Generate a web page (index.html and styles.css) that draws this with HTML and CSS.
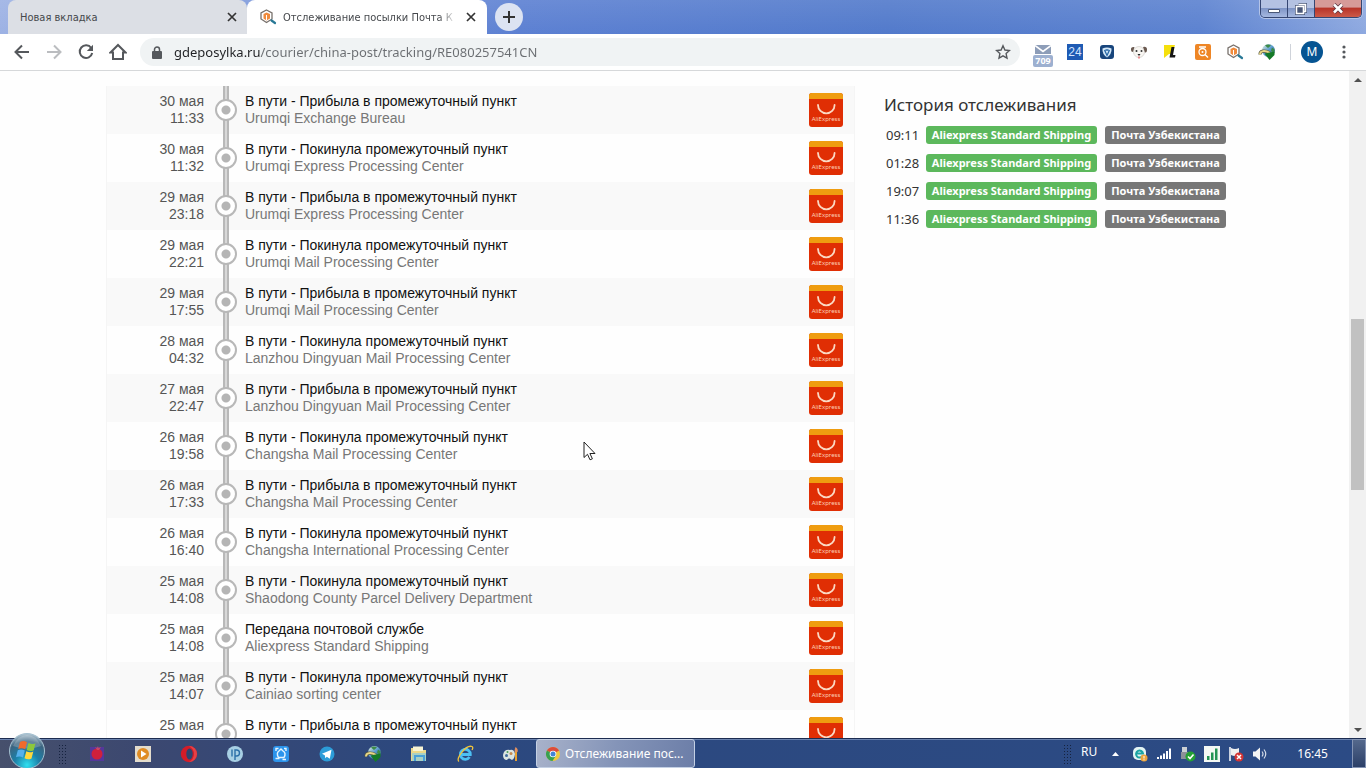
FILE: index.html
```html
<!DOCTYPE html>
<html lang="ru">
<head>
<meta charset="utf-8">
<title>Отслеживание посылки</title>
<link rel="stylesheet" href="styles.css">
</head>
<body>
<svg class="defs" aria-hidden="true">
  <linearGradient id="globe" x1="0" y1="0" x2="1" y2="1"><stop offset="0" stop-color="#e8f4d8"/><stop offset=".5" stop-color="#5a9ad0"/><stop offset="1" stop-color="#1c5a3a"/></linearGradient>
  <radialGradient id="orb" cx=".5" cy=".9" r=".9"><stop offset="0" stop-color="#2fe0f0"/><stop offset=".4" stop-color="#1c80a8"/><stop offset=".75" stop-color="#3c6480"/><stop offset="1" stop-color="#b8ccd8"/></radialGradient>
  <symbol id="ali" viewBox="0 0 34 34"><rect width="34" height="34" rx="3" fill="#e02e04"/><path d="M0 6V3Q0 0 3 0H31Q34 0 34 3V6Z" fill="#ef9d10"/><path d="M9 12a8.3 8.3 0 0 0 16.600 0" fill="none" stroke="#fbd9c4" stroke-width="1.800" stroke-linecap="round"/></symbol>
  <symbol id="parcel" viewBox="0 0 18 18"><path d="M7.500 2 13 5V11L7.500 14.500 2 11V5Z" fill="#fff" stroke="#78716c" stroke-width="1.300"/><path d="M4.500 6 7.500 4.500 11 6V10.500L7.500 12.500 4.500 10.500Z" fill="#f08a3c"/><path d="M7.500 7v5" stroke="#fff"/><path d="m12.500 12.500 3.500 2.500" stroke="#287896" stroke-width="2.200" stroke-linecap="round"/></symbol>
  <symbol id="idm" viewBox="0 0 18 18"><circle cx="10.500" cy="7.500" r="6.500" fill="url(#globe)"/><path d="M7 2.500q3-2 6 0l-3 2.500ZM14 4.500l2.500 2-1 4-2.500-3Z" fill="#3c8a48"/><path d="M2 11.500C2 7.500 7 7 12 10" fill="none" stroke="#5a5a40" stroke-width="3.200"/><path d="M2 11.500C2 7.500 7 7 12 10" fill="none" stroke="#e8d888" stroke-width="2"/><path d="M6.500 10.500 16.500 8.500V12L11.500 17Z" fill="#157a28"/></symbol>
  <symbol id="x" viewBox="0 0 10 10"><path d="m1 1 8 8M9 1 1 9" stroke="currentColor" stroke-width="1.700"/></symbol>
</svg>

<header class="tabs">
  <div class="tab"><span class="tab-title">Новая вкладка</span><button class="tab-close" aria-label="Закрыть"><svg width="10" height="10"><use href="#x"/></svg></button></div>
  <div class="tab tab-active"><svg width="18" height="18"><use href="#parcel"/></svg><span class="tab-title fade">Отслеживание посылки Почта К</span><button class="tab-close" aria-label="Закрыть"><svg width="10" height="10"><use href="#x"/></svg></button></div>
  <button class="new-tab" aria-label="Новая вкладка"><svg width="14" height="14" viewBox="0 0 14 14"><path d="M7 1v12M1 7h12" stroke="#333" stroke-width="2"/></svg></button>
  <div class="window-controls">
    <button aria-label="Свернуть"><svg width="14" height="10" viewBox="0 0 14 10"><path d="M1.500 5.500h11v3h-11z" fill="#fff" stroke="#4a5878"/></svg></button>
    <button aria-label="Развернуть"><svg width="14" height="12" viewBox="0 0 14 12"><path d="M4.500 1.500h7v7h-2M2.500 3.500h7v7h-7zM5.500 6.500h1v1h-1z" fill="none" stroke="#4a5878" stroke-width="3"/><path d="M4.500 1.500h7v7h-2M2.500 3.500h7v7h-7z" fill="none" stroke="#fff" stroke-width="1.600"/></svg></button>
    <button class="close" aria-label="Закрыть"><svg width="12" height="11" viewBox="0 0 12 11"><path d="m2 1.500 8 8M10 1.500l-8 8" stroke="#5a3440" stroke-width="4"/><path d="m2 1.500 8 8M10 1.500l-8 8" stroke="#fff" stroke-width="2.500"/></svg></button>
  </div>
</header>

<nav class="toolbar">
  <button class="tool" aria-label="Назад"><svg width="16" height="16" viewBox="0 0 16 16"><path d="M15 8H2M8 1.500 1.500 8 8 14.500" fill="none" stroke="#55585c" stroke-width="2"/></svg></button>
  <button class="tool" aria-label="Вперёд"><svg width="16" height="16" viewBox="0 0 16 16"><path d="M1 8h13M8 1.500 14.500 8 8 14.500" fill="none" stroke="#bbbdc0" stroke-width="2"/></svg></button>
  <button class="tool" aria-label="Обновить"><svg width="16" height="16" viewBox="0 0 16 16"><path d="M13.200 4A6.300 6.300 0 1 0 14.200 9" fill="none" stroke="#55585c" stroke-width="2"/><path d="M15 .8V7H8.800Z" fill="#55585c"/></svg></button>
  <button class="tool" aria-label="Домой"><svg width="18" height="18" viewBox="0 0 18 18"><path d="M1.500 9.500 9 2l7.500 7.500H14V16H4V9.500Z" fill="none" stroke="#55585c" stroke-width="2"/></svg></button>
  <div class="omnibox">
    <svg width="10" height="13" viewBox="0 0 10 13"><path d="M1 5h8q1 0 1 1v6q0 1-1 1H1q-1 0-1-1V6q0-1 1-1Z" fill="#55585c"/><path d="M2.500 6V3.500a2.500 2.500 0 0 1 5 0V6" fill="none" stroke="#55585c" stroke-width="1.500"/></svg>
    <input class="url" type="text" aria-label="Адрес" value="gdeposylka.ru/courier/china-post/tracking/RE080257541CN">
    <button class="star" aria-label="В закладки"><svg width="16" height="16" viewBox="0 0 16 16"><path d="m8 1.800 1.900 4.200 4.600.5-3.400 3.100.9 4.500L8 11.800l-4 2.300.9-4.500L1.500 6.500 6.100 6Z" fill="none" stroke="#55585c" stroke-width="1.400"/></svg></button>
  </div>
  <div class="extensions">
    <button class="tool mail" aria-label="Почта"><svg width="16" height="9" viewBox="0 0 16 9"><path d="M0 0h16v9H0z" fill="#8d9db8"/><path d="m0 .5 8 6 8-6" fill="none" stroke="#fff" stroke-width="1.600"/></svg><span class="mail-count">709</span></button>
    <button class="tool"><span class="ext-24">24</span></button>
    <button class="tool" aria-label="Защита"><svg width="14" height="14" viewBox="0 0 14 14"><rect width="14" height="14" rx="3" fill="#18457c"/><path d="M2.500 3.500Q7 1.500 11.500 3.500Q12 9 7 12.500Q2 9 2.500 3.500Z" fill="#d4e8f8"/><path d="M4.500 5 7 10.500 9.500 5M5.500 5h3" fill="none" stroke="#2a6aa8" stroke-width="1.300"/></svg></button>
    <button class="tool" aria-label="Собака"><svg width="18" height="14" viewBox="0 0 18 14"><ellipse cx="9" cy="7" rx="5.500" ry="5.500" fill="#f8f6f2" stroke="#c8c4c0" stroke-width=".6"/><path d="M4.500 2Q.5 1.500 1 5q0 2 2 2ZM13 2q4-.8 4 2.500 0 3.500-2 3Z" fill="#6a5a50"/><circle cx="6.500" cy="6" r="1" fill="#333"/><circle cx="11.500" cy="6" r="1" fill="#333"/><path d="M7.500 9h3L9 11Z" fill="#222"/><path d="M8 11.500h2v2H8z" fill="#e88c90"/></svg></button>
    <button class="tool" aria-label="Letyshops"><svg width="14" height="14" viewBox="0 0 14 14"><path d="M0 0h11L8 9H5l-5 4Z" fill="#f5e00c"/><path d="M7.500 2h3L9 10h2.500l-.5 2.500H5.500Z" fill="#151515"/></svg></button>
    <button class="tool" aria-label="Поиск товаров"><svg width="16" height="16" viewBox="0 0 16 16"><rect width="16" height="16" rx="2" fill="#ee8626"/><circle cx="7.500" cy="8" r="3.500" fill="none" stroke="#fff" stroke-width="1.300"/><path d="m10 10.500 3 3M4 3h7" stroke="#fff" stroke-width="1.400"/><circle cx="7.500" cy="8" r="1" fill="#fff"/></svg></button>
    <button class="tool" aria-label="Где посылка"><svg width="18" height="18"><use href="#parcel"/></svg></button>
    <button class="tool" aria-label="Загрузчик"><svg width="18" height="18"><use href="#idm"/></svg></button>
  </div>
  <span class="divider"></span>
  <button class="tool"><span class="avatar">М</span></button>
  <button class="tool" aria-label="Меню"><svg width="4" height="14" viewBox="0 0 4 14"><g fill="#55585c"><circle cx="2" cy="2" r="1.600"/><circle cx="2" cy="7" r="1.600"/><circle cx="2" cy="12" r="1.600"/></g></svg></button>
</nav>

<div class="viewport">
  <main class="page">
    <ol class="events">
      <li><time>30 мая<br>11:33</time><i class="dot"></i><p>В пути - Прибыла в промежуточный пункт<br><small>Urumqi Exchange Bureau</small></p><span class="ali"><svg><use href="#ali"/></svg><b>AliExpress</b></span></li>
      <li><time>30 мая<br>11:32</time><i class="dot"></i><p>В пути - Покинула промежуточный пункт<br><small>Urumqi Express Processing Center</small></p><span class="ali"><svg><use href="#ali"/></svg><b>AliExpress</b></span></li>
      <li><time>29 мая<br>23:18</time><i class="dot"></i><p>В пути - Прибыла в промежуточный пункт<br><small>Urumqi Express Processing Center</small></p><span class="ali"><svg><use href="#ali"/></svg><b>AliExpress</b></span></li>
      <li><time>29 мая<br>22:21</time><i class="dot"></i><p>В пути - Покинула промежуточный пункт<br><small>Urumqi Mail Processing Center</small></p><span class="ali"><svg><use href="#ali"/></svg><b>AliExpress</b></span></li>
      <li><time>29 мая<br>17:55</time><i class="dot"></i><p>В пути - Прибыла в промежуточный пункт<br><small>Urumqi Mail Processing Center</small></p><span class="ali"><svg><use href="#ali"/></svg><b>AliExpress</b></span></li>
      <li><time>28 мая<br>04:32</time><i class="dot"></i><p>В пути - Покинула промежуточный пункт<br><small>Lanzhou Dingyuan Mail Processing Center</small></p><span class="ali"><svg><use href="#ali"/></svg><b>AliExpress</b></span></li>
      <li><time>27 мая<br>22:47</time><i class="dot"></i><p>В пути - Прибыла в промежуточный пункт<br><small>Lanzhou Dingyuan Mail Processing Center</small></p><span class="ali"><svg><use href="#ali"/></svg><b>AliExpress</b></span></li>
      <li><time>26 мая<br>19:58</time><i class="dot"></i><p>В пути - Покинула промежуточный пункт<br><small>Changsha Mail Processing Center</small></p><span class="ali"><svg><use href="#ali"/></svg><b>AliExpress</b></span></li>
      <li><time>26 мая<br>17:33</time><i class="dot"></i><p>В пути - Прибыла в промежуточный пункт<br><small>Changsha Mail Processing Center</small></p><span class="ali"><svg><use href="#ali"/></svg><b>AliExpress</b></span></li>
      <li><time>26 мая<br>16:40</time><i class="dot"></i><p>В пути - Покинула промежуточный пункт<br><small>Changsha International Processing Center</small></p><span class="ali"><svg><use href="#ali"/></svg><b>AliExpress</b></span></li>
      <li><time>25 мая<br>14:08</time><i class="dot"></i><p>В пути - Покинула промежуточный пункт<br><small>Shaodong County Parcel Delivery Department</small></p><span class="ali"><svg><use href="#ali"/></svg><b>AliExpress</b></span></li>
      <li><time>25 мая<br>14:08</time><i class="dot"></i><p>Передана почтовой службе<br><small>Aliexpress Standard Shipping</small></p><span class="ali"><svg><use href="#ali"/></svg><b>AliExpress</b></span></li>
      <li><time>25 мая<br>14:07</time><i class="dot"></i><p>В пути - Покинула промежуточный пункт<br><small>Cainiao sorting center</small></p><span class="ali"><svg><use href="#ali"/></svg><b>AliExpress</b></span></li>
      <li><time>25 мая</time><i class="dot"></i><p>В пути - Прибыла в промежуточный пункт</p><span class="ali"><svg><use href="#ali"/></svg></span></li>
    </ol>
    <aside class="history">
      <h2>История отслеживания</h2>
      <ul>
        <li><time>09:11</time><span class="label green">Aliexpress Standard Shipping</span><span class="label">Почта Узбекистана</span></li>
        <li><time>01:28</time><span class="label green">Aliexpress Standard Shipping</span><span class="label">Почта Узбекистана</span></li>
        <li><time>19:07</time><span class="label green">Aliexpress Standard Shipping</span><span class="label">Почта Узбекистана</span></li>
        <li><time>11:36</time><span class="label green">Aliexpress Standard Shipping</span><span class="label">Почта Узбекистана</span></li>
      </ul>
    </aside>
  </main>
  <div class="scrollbar"><i class="arrow up"></i><div class="track"><div class="thumb"></div></div><i class="arrow down"></i></div>
</div>

<footer class="taskbar">
  <button class="start" aria-label="Пуск"><svg width="38" height="38" viewBox="0 0 38 38"><circle cx="19" cy="19" r="17.500" fill="url(#orb)" stroke="#a4c0d0"/><path d="M5 14Q10 3 19 3T33 14Q19 19 5 14Z" fill="#fff" opacity=".22"/><path d="M12 10q3.500-2 7 .2l-1.800 7q-3.400-2-7-.2Z" fill="#f06a2c"/><path d="M20.500 11q3.500 2 7 .2l-1.800 7q-3.500 1.800-7-.2Z" fill="#8cc83c"/><path d="M9.800 18.300q3.400-1.800 7 .2l-1.800 7q-3.500-2-7-.2Z" fill="#54b0ec"/><path d="M18.300 19.300q3.500 2 7 .2l-1.800 7q-3.500 1.800-7-.2Z" fill="#ffd83c"/></svg></button>
  <i class="grip"></i>
  <div class="launch">
    <button aria-label="Помидор"><svg width="18" height="18" viewBox="0 0 18 18"><path d="M2 2h14v14H2z" fill="#54389a"/><circle cx="9" cy="9" r="5.500" fill="#d0203c"/><path d="m9 5-2-3 2 1 1-2 .5 2L13 2l-2 3Z" fill="#c44868"/></svg></button>
    <button aria-label="Проигрыватель"><svg width="18" height="18" viewBox="0 0 18 18"><rect x="1" y="1" width="16" height="16" fill="#e4dccc"/><circle cx="9" cy="9" r="6" fill="#e08c24"/><path d="m7 5.500 5.500 3.500L7 12.500Z" fill="#fff"/></svg></button>
    <button aria-label="Opera"><svg width="18" height="18" viewBox="0 0 18 18"><circle cx="9" cy="9" r="8.200" fill="#d41c28"/><ellipse cx="9.500" cy="9" rx="3.200" ry="5.500" fill="#2c4470"/><path d="M9 1a8 8 0 0 1 0 16q5-3 5-8T9 1Z" fill="#f05a5a" opacity=".6"/></svg></button>
    <button aria-label="IP"><svg width="18" height="18" viewBox="0 0 18 18"><circle cx="9" cy="9" r="8" fill="#a8d0e4"/><path d="M6 4.500v7M9 15V5h1.500a3 3 0 0 1 0 6H9" fill="none" stroke="#2c70a8" stroke-width="1.400"/></svg></button>
    <button aria-label="Перезапуск"><svg width="18" height="18" viewBox="0 0 18 18"><rect x="1" y="1" width="16" height="16" rx="3" fill="#2c94ec"/><path d="M6.500 12.500Q4 8 7 6l2-2 2 2q3.500 2 1 6.500ZM4 6V3.500h2.500M12 3.500h2V6M3.500 13.500h4M10.500 14.500H14" fill="none" stroke="#e4f4ff" stroke-width="1.400"/></svg></button>
    <button aria-label="Telegram"><svg width="18" height="18" viewBox="0 0 18 18"><circle cx="9" cy="9" r="7.500" fill="#2c9cd8"/><path d="m4 8.800 9.500-4-1.700 9-3-2-1.500 1.500-.5-3Z" fill="#fff"/></svg></button>
    <button aria-label="Загрузчик"><svg width="18" height="18"><use href="#idm"/></svg></button>
    <button aria-label="Проводник"><svg width="18" height="18" viewBox="0 0 18 18"><path d="M1 3h6l1 2h8v11H1Z" fill="#ecd888"/><path d="M3 1.500h10V6H3z" fill="#f8f4d4"/><path d="M2 8h14v8H2z" fill="#a8d0c4"/><path d="M5 16v-5h9v5" fill="none" stroke="#48a0d8" stroke-width="2"/></svg></button>
    <button aria-label="Internet Explorer"><svg width="18" height="18" viewBox="0 0 18 18"><path d="M13.500 12a5 5 0 1 1 .8-2.500H5" fill="none" stroke="#4cc0f4" stroke-width="2.800"/><path d="M3 16.500C-1 14 10-.5 16 1.500q1.500 1 0 3.500" fill="none" stroke="#f0c43c" stroke-width="1.300"/></svg></button>
    <button aria-label="Paint"><svg width="18" height="18" viewBox="0 0 18 18"><path d="M1 10Q2 4 8 5q4-1 5 4-1 7-4 5.500-2-2-4 .5Q1 15 1 10Z" fill="#dce4e0"/><circle cx="4.500" cy="10.500" r="1.500" fill="#406c9c"/><circle cx="9" cy="8.500" r="1.500" fill="#c48850"/><circle cx="5.500" cy="7" r="1" fill="#48a058"/><path d="M14 7v9" stroke="#e8a030" stroke-width="2"/><path d="M12.500 7q0-3 1-5 3 2 2 5Z" fill="#e09060"/></svg></button>
  </div>
  <button class="task"><svg width="16" height="16" viewBox="0 0 16 16"><circle cx="8" cy="8" r="7" fill="#f0c83c"/><path d="M8 8 1.900 4.500A7 7 0 0 1 14.100 4.500Z" fill="#dc4c3c"/><path d="M8 8 1.900 4.500A7 7 0 0 0 7.500 15L11 9.500Z" fill="#38a050"/><circle cx="8" cy="8" r="3.300" fill="#fff"/><circle cx="8" cy="8" r="2.500" fill="#4484d4"/></svg>Отслеживание пос...</button>
  <div class="tray">
    <i class="grip"></i>
    <span class="lang">RU</span>
    <button aria-label="Показать значки"><svg width="7" height="4" viewBox="0 0 7 4"><path d="M0 4 3.500 0 7 4Z" fill="#fff"/></svg></button>
    <svg width="16" height="16" viewBox="0 0 16 16"><rect x="1" y="1" width="13" height="13" rx="5" fill="#e4f4f4"/><path d="M10.500 10a3.500 3.500 0 1 1 .5-2.500H5" fill="none" stroke="#1ca4a4" stroke-width="2"/><circle cx="12" cy="12" r="3.500" fill="#eca43c"/><path d="M12 10v2.500M12 13.300v1" stroke="#fff"/></svg>
    <svg width="16" height="16" viewBox="0 0 16 16"><path d="M1 11h2v2H1zM4 9.500h2V13H4zM7 7.500h2V13H7zM10 5h2v8h-2zM13 2.500h2V13h-2z" fill="#fff"/></svg>
    <svg width="16" height="16" viewBox="0 0 16 16"><path d="M2 1h5v5H2z" fill="#ccd0d4"/><path d="M1 6h7v7H1z" fill="#8c9098"/><circle cx="10.500" cy="10.500" r="5" fill="#24a034"/><path d="m8 10.500 2 2 3.500-4" fill="none" stroke="#fff" stroke-width="1.600"/></svg>
    <svg width="16" height="16" viewBox="0 0 16 16"><path d="M0 0h16v16H0z" fill="#f4f8f4"/><path d="M3 10h2.500v4H3zM7 6.500h2.500V14H7zM11 2.500h2.500V14H11z" fill="#249454"/></svg>
    <svg width="16" height="16" viewBox="0 0 16 16"><path d="M2 1v14" stroke="#fff" stroke-width="1.500"/><path d="M3 2q4 2 8 0v7q-4 2-8 0Z" fill="#f0f0f0"/><circle cx="11" cy="11" r="4.500" fill="#d43434"/><path d="m9 9 4 4M13 9l-4 4" stroke="#fff" stroke-width="1.500"/></svg>
    <svg width="16" height="16" viewBox="0 0 16 16"><path d="M1 5.500h2.500L8 1.500v13l-4.500-4H1Z" fill="#f4f4f4"/><path d="M10 5.500q2 2.500 0 5M12 3.500q3.500 4.500 0 9" fill="none" stroke="#d4dce8" stroke-width="1.200"/></svg>
    <time class="clock">16:45</time>
    <button class="desktop" aria-label="Показать рабочий стол"></button>
  </div>
</footer>

<svg class="cursor" width="13" height="20" viewBox="0 0 13 20" aria-hidden="true"><path d="M1 1v15.500l3.500-3.200 2.500 5.500 2.400-1-2.500-5.300H12Z" fill="#fff" stroke="#222"/></svg>
</body>
</html>
```
FILE: styles.css
```css
*, ::before { box-sizing: border-box; }
body {
  margin: 0;
  height: 100vh;
  display: flex;
  flex-direction: column;
  overflow: hidden;
  background: #fefefe;
  color: #111;
  font: 13px/17px "Noto Sans", sans-serif;
}
button { border: 0; padding: 0; background: none; font: inherit; color: inherit; display: flex; align-items: center; justify-content: center; }
ol, ul, p, h2 { margin: 0; padding: 0; list-style: none; }
svg { display: block; flex: none; }
.defs { position: absolute; width: 0; height: 0; }

.tabs {
  flex: none;
  height: 34px;
  display: flex;
  padding-left: 8px;
  background: linear-gradient(#ffffff18, #ffffff00), linear-gradient(90deg, #9db2e4 0, #5c80d2 38%, #527acb 65%, #5c82d0 88%, #8ea9e0 100%);
}
.tab {
  width: 239px;
  display: flex;
  align-items: center;
  gap: 6px;
  padding: 0 10px 0 12px;
  border-radius: 8px 8px 0 0;
  background: #dcdfe5;
  color: #45484c;
  font: 11px/17px "DejaVu Sans Condensed", "Noto Sans", sans-serif;
}
.tab-active { width: 240px; background: #fff; padding-right: 11px; }
.tab-title { flex: 1; white-space: nowrap; overflow: hidden; }
.fade { -webkit-mask-image: linear-gradient(90deg, #000 88%, transparent 98%); mask-image: linear-gradient(90deg, #000 88%, transparent 98%); }
.tab-close { color: #333; }
.new-tab { width: 28px; height: 28px; margin: 3px 0 0 8px; border-radius: 50%; background: #dce3f2; }
.window-controls {
  display: flex;
  height: 18px;
  margin: 0 4px 0 auto;
  border: 1px solid #354672;
  border-top: 0;
  border-radius: 0 0 5px 5px;
  overflow: hidden;
  box-shadow: 0 0 0 1px #b4c4e8;
}
.window-controls button { width: 27px; border-right: 1px solid #354672; background: linear-gradient(#b4c2e2 45%, #7f95c6 50%, #a6b8e0); }
.window-controls .close { width: 46px; border: 0; background: linear-gradient(#d69a98 40%, #b8352a 50%, #cc5a48); }

.toolbar {
  flex: none;
  height: 37px;
  display: flex;
  align-items: center;
  padding: 0 6px;
  background: #fff;
  border-bottom: 1px solid #d6d8da;
}
.tool { width: 32px; height: 32px; }
.omnibox {
  flex: 1;
  height: 28px;
  display: flex;
  align-items: center;
  gap: 12px;
  margin: 0 7px 0 6px;
  padding: 0 9px 0 12px;
  border-radius: 14px;
  background: #f0f3f4;
}
.url {
  flex: 1;
  min-width: 0;
  border: 0;
  padding: 0;
  outline: 0;
  font: inherit;
  background: linear-gradient(90deg, #202124 86px, #6a6d71 86px);
  -webkit-background-clip: text;
  background-clip: text;
  -webkit-text-fill-color: transparent;
}
.extensions { display: flex; }
.mail { flex-direction: column; padding-top: 8px; gap: 1px; }
.mail-count { width: 20px; border-radius: 2px; background: #9db0d0; color: #fff; font: bold 9px/12px "Noto Sans", sans-serif; }
.ext-24 { width: 16px; background: #1f5bb4; color: #d6e6ff; font: 12px/16px "Liberation Sans", sans-serif; }
.divider { width: 1px; height: 16px; margin: 0 5px 0 7px; background: #cfd3da; }
.avatar { width: 22px; border-radius: 50%; background: #065492; color: #fff; font: 12px/22px "Noto Sans", sans-serif; }

.viewport { flex: 1; min-height: 0; display: flex; overflow: hidden; }
.page { flex: 1; display: flex; align-items: flex-start; gap: 29px; padding: 15px 16px 0 106px; }
.events { flex: 1; border: solid #f5f5f5; border-width: 0 1px; font: 14px/17px "Liberation Sans", sans-serif; }
.events li {
  height: 48px;
  display: grid;
  grid-template-columns: 97px 33px 1fr 34px;
  align-items: start;
  padding: 7px 11px 7px 0;
}
.events li:nth-child(odd) { background: #f9f9f9; }
.events time { text-align: right; color: #555; }
.events p { padding-left: 8px; color: #111; }
.events small { font-size: 14px; color: #777; }
.dot {
  align-self: stretch;
  margin: -7px 0 -7px 10px;
  width: 24px;
  display: grid;
  place-items: center;
  background: linear-gradient(90deg, transparent 9px, #b8b8b8 9px 11px, #d8d8d8 11px 13px, #b8b8b8 13px 15px, transparent 15px);
}
.dot::before { content: ""; width: 22px; height: 22px; border: 2px solid #b8b8b8; border-radius: 50%; background: radial-gradient(#b5b5b5 4px, #fff 5px); }
.ali { position: relative; }
.ali svg { width: 34px; height: 34px; }
.ali b { position: absolute; inset: auto 0 4px; text-align: center; color: #fcd0b8; font: 6px/8px "Noto Sans", sans-serif; }

.history { width: 449px; padding-top: 8px; color: #333; }
.history h2 { font-size: 17px; line-height: 22px; font-weight: normal; }
.history ul { display: grid; gap: 10px; padding: 10px 0 0 2px; line-height: 18px; }
.history li { display: grid; grid-template-columns: 40px 171px 8px 121px; }
.label { border-radius: 3px; background: #777; color: #fff; font: bold 11px/18px "Noto Sans", sans-serif; text-align: center; white-space: nowrap; }
.label:last-child { grid-column: 4; }
.green { background: #5cb85c; }

.scrollbar { width: 17px; display: flex; flex-direction: column; align-items: center; background: #f1f1f1; }
.arrow { height: 17px; display: grid; place-items: center; }
.arrow::before { content: ""; border: 4px solid transparent; }
.up::before { border-top: 0; border-bottom-color: #505050; }
.down::before { border-bottom: 0; border-top-color: #505050; }
.track { flex: 1; width: 13px; display: grid; grid-template-rows: 231fr 171fr 231fr; }
.thumb { grid-row: 2; background: #c1c1c1; }

.taskbar {
  flex: none;
  height: 30px;
  display: flex;
  align-items: stretch;
  border-top: 1px solid #1c2c50;
  background: linear-gradient(90deg, #46506c 0, #3c4870 10%, #2c487e 30%, #2c4b85 100%);
  box-shadow: inset 0 1px #6c84b0;
  color: #fff;
  font: 12px/17px "Noto Sans", sans-serif;
}
.start { width: 54px; margin-top: -7px; align-items: flex-start; }
.grip { width: 8px; height: 20px; margin: 5px 8px 0 4px; background: radial-gradient(#16233f 1px, transparent 1px) 0 0 / 3px 3px; }
.launch { display: flex; }
.launch button { width: 46px; }
.task {
  width: 159px;
  margin-left: 2px;
  justify-content: flex-start;
  gap: 4px;
  padding-left: 8px;
  border: 1px solid #c4d0e4;
  border-radius: 3px;
  background: linear-gradient(100deg, #a8b2ca, #8494b8 50%, #6c7ea8);
}
.tray { margin-left: auto; display: flex; align-items: center; gap: 8px; }
.tray .grip { align-self: flex-start; margin: 5px 2px 0 0; }
.lang { padding-bottom: 5px; }
.tray button { margin: 0 5px 0 7px; }
.clock { margin: 0 16px 0 21px; }
.tray .desktop { width: 14px; height: 100%; margin: 0; border: 1px solid #8494b4; background: linear-gradient(#54688c, #2c4068); }
.cursor { position: absolute; left: 583px; top: 441px; }
```
